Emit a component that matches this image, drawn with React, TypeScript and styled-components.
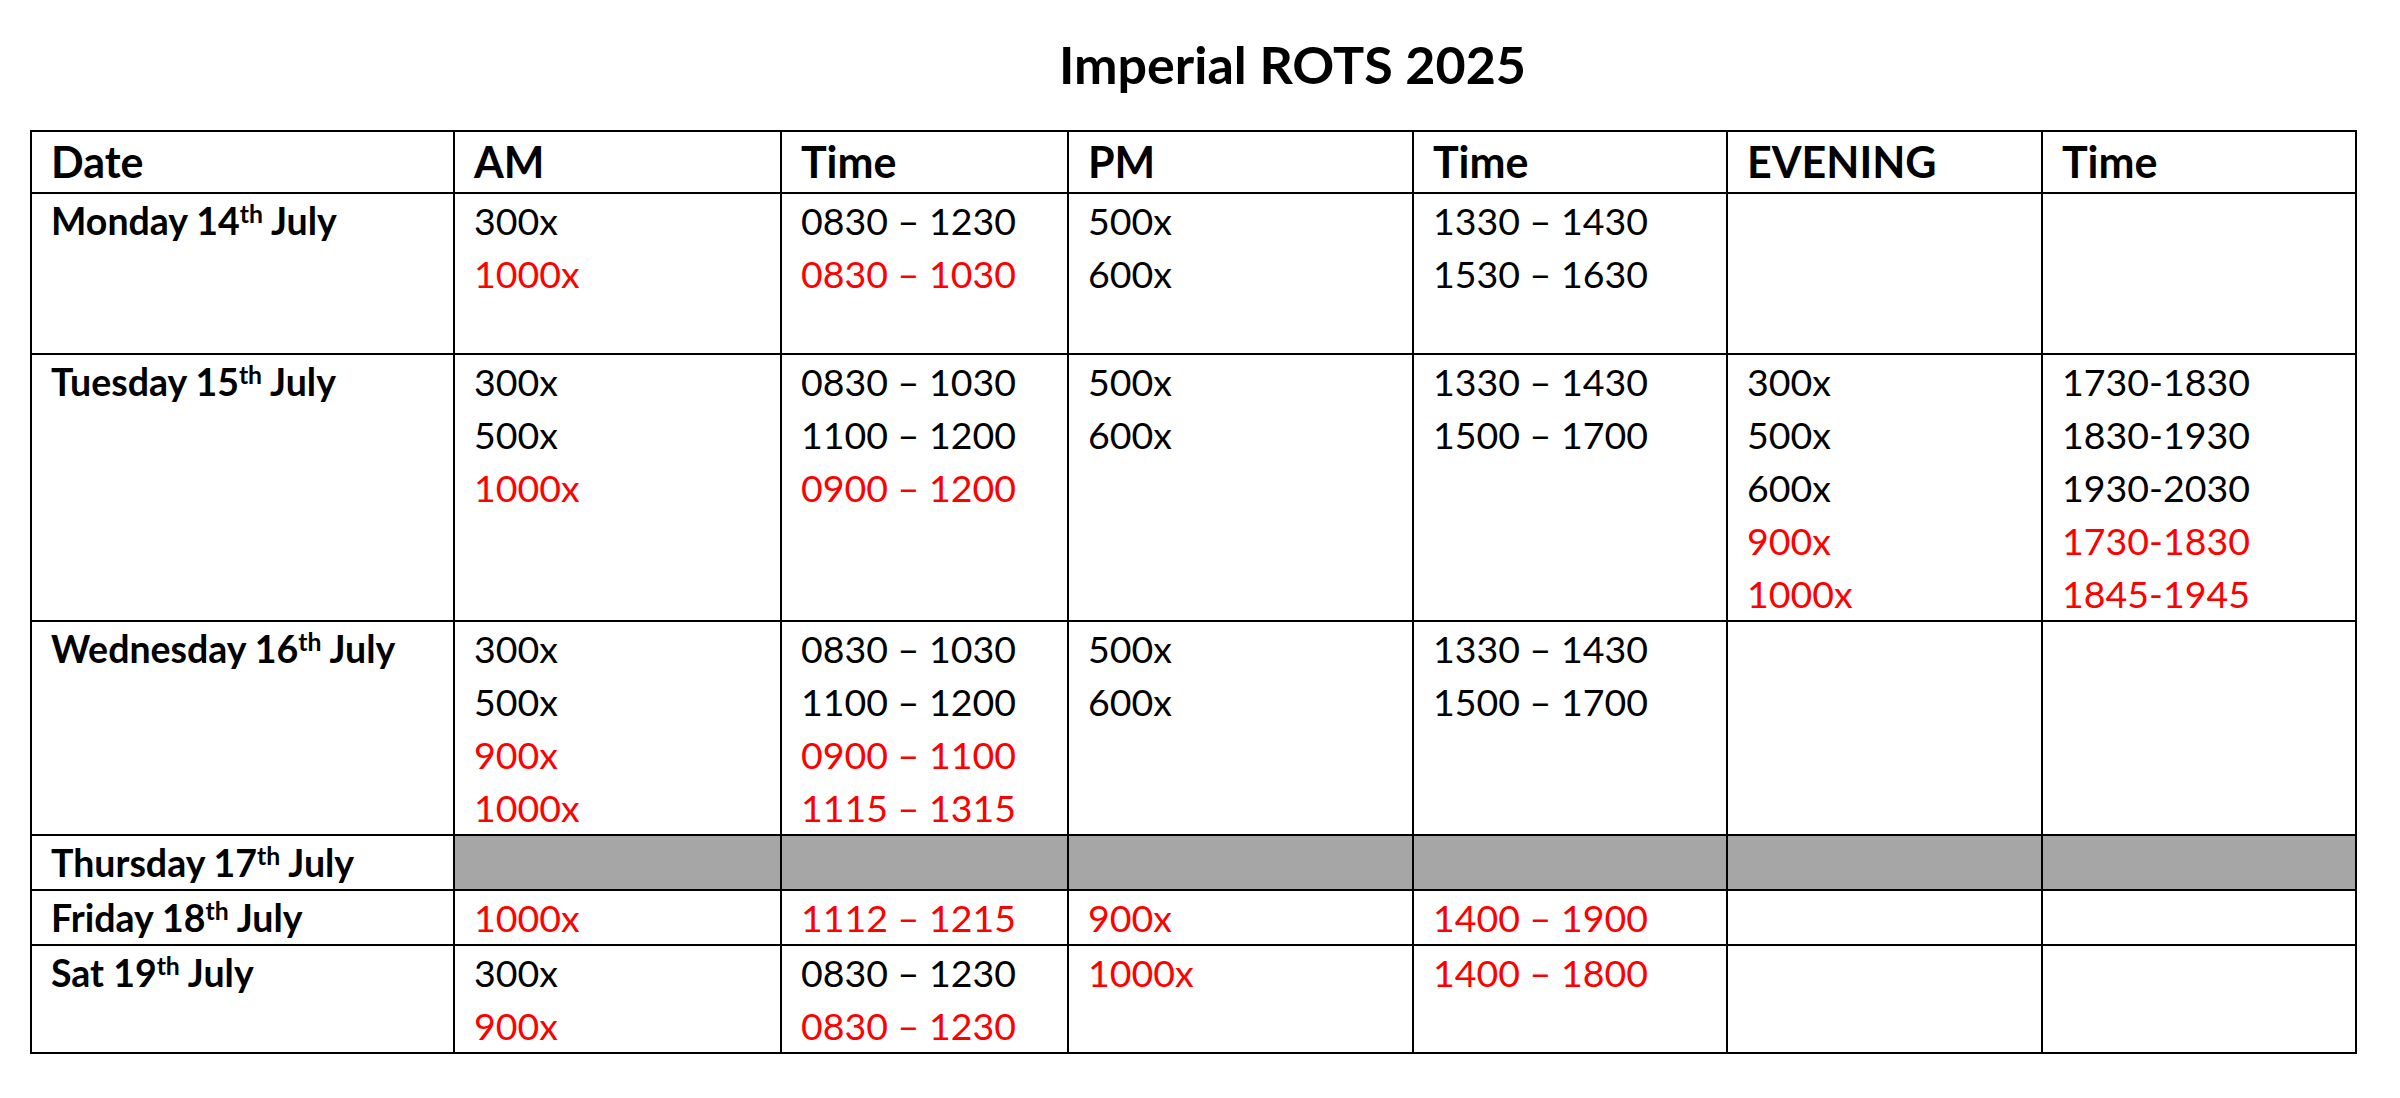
import React from "react";
import styled, { createGlobalStyle } from "styled-components";

const GlobalStyle = createGlobalStyle`
  html, body {
    margin: 0;
    padding: 0;
    background: #ffffff;
  }
  body {
    font-family: Lato, "Open Sans", "Liberation Sans", sans-serif;
    color: #000000;
  }
`;

// column widths, measured between grid lines
const columns = "423px 327px 287px 345px 314px 315px 314px";

const Page = styled.div`
  width: 2400px;
  padding: 34px 0 0 30px;
  box-sizing: border-box;
`;

const Title = styled.h1`
  width: 2327px;
  margin: 0 0 36px;
  padding-left: 198px;
  box-sizing: border-box;
  text-align: center;
  font-size: 52px;
  line-height: 60px;
  font-weight: 700;
`;

const Table = styled.div`
  width: 2327px;
  box-sizing: border-box;
  border-top: 2px solid #000;
  border-left: 2px solid #000;
`;

const Row = styled.div<{ $lines: number; $head?: boolean }>`
  display: grid;
  grid-template-columns: ${columns};
  min-height: ${(p) => (p.$head ? 60 : p.$lines * 53)}px;
  border-bottom: 2px solid #000;
`;

const Cell = styled.div<{ $head?: boolean; $shaded?: boolean; $bold?: boolean }>`
  box-sizing: border-box;
  border-right: 2px solid #000;
  padding-left: 19px;
  background: ${(p) => (p.$shaded ? "#a6a6a6" : "transparent")};
  font-size: ${(p) => (p.$head ? "43px" : "37.5px")};
  line-height: ${(p) => (p.$head ? "60px" : "53px")};
  font-weight: ${(p) => (p.$head || p.$bold ? 700 : 400)};
  white-space: nowrap;
`;

const Line = styled.div<{ $red?: boolean }>`
  color: ${(p) => (p.$red ? "#ff0000" : "#000000")};
`;

const Sup = styled.sup`
  font-size: 0.66em;
  line-height: 0;
  vertical-align: 0.5em;
`;

type Entry = [string, boolean?];

type Day = {
  name: string;
  nth: string;
  month: string;
  lines: number;
  shaded?: boolean;
  cells: Entry[][];
};

const headers = ["Date", "AM", "Time", "PM", "Time", "EVENING", "Time"];

const days: Day[] = [
  {
    name: "Monday 14",
    nth: "th",
    month: " July",
    lines: 3,
    cells: [
      [["300x"], ["1000x", true]],
      [["0830 – 1230"], ["0830 – 1030", true]],
      [["500x"], ["600x"]],
      [["1330 – 1430"], ["1530 – 1630"]],
      [],
      [],
    ],
  },
  {
    name: "Tuesday 15",
    nth: "th",
    month: " July",
    lines: 5,
    cells: [
      [["300x"], ["500x"], ["1000x", true]],
      [["0830 – 1030"], ["1100 – 1200"], ["0900 – 1200", true]],
      [["500x"], ["600x"]],
      [["1330 – 1430"], ["1500 – 1700"]],
      [["300x"], ["500x"], ["600x"], ["900x", true], ["1000x", true]],
      [["1730-1830"], ["1830-1930"], ["1930-2030"], ["1730-1830", true], ["1845-1945", true]],
    ],
  },
  {
    name: "Wednesday 16",
    nth: "th",
    month: " July",
    lines: 4,
    cells: [
      [["300x"], ["500x"], ["900x", true], ["1000x", true]],
      [["0830 – 1030"], ["1100 – 1200"], ["0900 – 1100", true], ["1115 – 1315", true]],
      [["500x"], ["600x"]],
      [["1330 – 1430"], ["1500 – 1700"]],
      [],
      [],
    ],
  },
  {
    name: "Thursday 17",
    nth: "th",
    month: " July",
    lines: 1,
    shaded: true,
    cells: [[], [], [], [], [], []],
  },
  {
    name: "Friday 18",
    nth: "th",
    month: " July",
    lines: 1,
    cells: [
      [["1000x", true]],
      [["1112 – 1215", true]],
      [["900x", true]],
      [["1400 – 1900", true]],
      [],
      [],
    ],
  },
  {
    name: "Sat 19",
    nth: "th",
    month: " July",
    lines: 2,
    cells: [
      [["300x"], ["900x", true]],
      [["0830 – 1230"], ["0830 – 1230", true]],
      [["1000x", true]],
      [["1400 – 1800", true]],
      [],
      [],
    ],
  },
];

const App = () => {
  return (
    <Page>
      <GlobalStyle />
      <Title>Imperial ROTS 2025</Title>
      <Table>
        <Row $lines={1} $head>
          {headers.map((h, i) => (
            <Cell key={i} $head>
              {h}
            </Cell>
          ))}
        </Row>
        {days.map((d) => (
          <Row key={d.name} $lines={d.lines}>
            <Cell $bold>
              {d.name}
              <Sup>{d.nth}</Sup>
              {d.month}
            </Cell>
            {d.cells.map((c, i) => (
              <Cell key={i} $shaded={d.shaded}>
                {c.map(([text, red], j) => (
                  <Line key={j} $red={red}>
                    {text}
                  </Line>
                ))}
              </Cell>
            ))}
          </Row>
        ))}
      </Table>
    </Page>
  );
};

export default App;
